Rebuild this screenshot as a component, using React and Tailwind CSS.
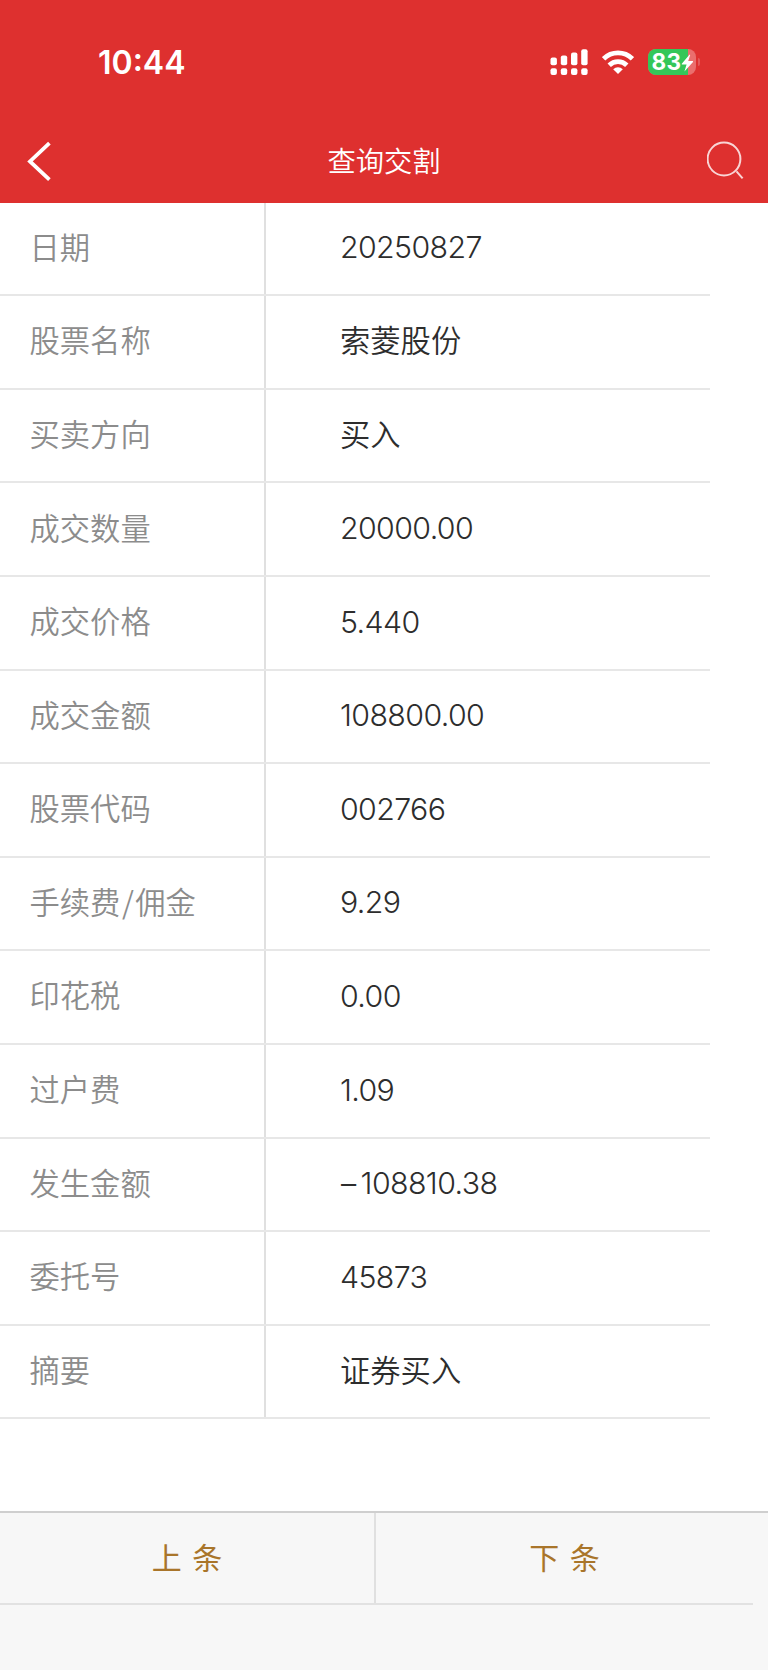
const rows = [
  { label: '日期', value: '20250827' },
  { label: '股票名称', value: '索菱股份' },
  { label: '买卖方向', value: '买入' },
  { label: '成交数量', value: '20000.00' },
  { label: '成交价格', value: '5.440' },
  { label: '成交金额', value: '108800.00' },
  { label: '股票代码', value: '002766' },
  { label: '手续费/佣金', value: '9.29' },
  { label: '印花税', value: '0.00' },
  { label: '过户费', value: '1.09' },
  { label: '发生金额', value: '–108810.38' },
  { label: '委托号', value: '45873' },
  { label: '摘要', value: '证券买入' },
];

function SignalIcon() {
  return (
    <svg width="38" height="27" viewBox="0 0 38 27" fill="#fff">
      <rect x="0.5" y="8.6" width="6.4" height="7.6" rx="2" />
      <rect x="10.8" y="6.6" width="6.4" height="9.6" rx="2" />
      <rect x="21" y="3.4" width="6.4" height="12.8" rx="2" />
      <rect x="31.2" y="0.2" width="6.4" height="16" rx="2" />
      <rect x="0.5" y="19.3" width="6.4" height="6.8" rx="2" />
      <rect x="10.8" y="19.3" width="6.4" height="6.8" rx="2" />
      <rect x="21" y="19.3" width="6.4" height="6.8" rx="2" />
      <rect x="31.2" y="19.3" width="6.4" height="6.8" rx="2" />
    </svg>
  );
}

function WifiIcon() {
  return (
    <svg width="32" height="24" viewBox="0 0 32 24" fill="none" stroke="#fff" strokeWidth="4.8">
      <path d="M1.6 8.8A20.6 20.6 0 0 1 30.4 8.8" />
      <path d="M7.2 15.2A12.6 12.6 0 0 1 24.8 15.2" />
      <path d="M11.2 19.2A7 7 0 0 1 20.8 19.2L16 24Z" fill="#fff" stroke="none" />
    </svg>
  );
}

function Battery() {
  return (
    <div className="flex items-center gap-[2px]">
      <div className="relative flex h-[26px] w-12 items-center overflow-hidden rounded-[8px] bg-[#ea6e6d]">
        <div className="absolute inset-y-0 left-0 w-[40px] bg-[#34c759]" />
        <span className="relative ml-[4px] pt-px text-[22.5px] leading-none font-bold tracking-[0.3px] text-white">83</span>
        <svg className="absolute top-[5px] left-[33px]" width="13" height="18" viewBox="0 0 13 18" fill="#fff">
          <path d="M8.6 0.6L0.8 9.8Q0.4 10.6 1.2 10.6H5.6L3.4 17.4L12 7.9Q12.4 7 11.6 7H7.2L9.2 1Z" />
        </svg>
      </div>
      <div className="h-[8px] w-[2.5px] rounded-r-full bg-[#e2595a]" />
    </div>
  );
}

function Header() {
  return (
    <header className="flex h-[202.6px] flex-col bg-[#de302f] text-white">
      <div className="flex h-[124px] items-center justify-between pr-[68px] pl-[98px]">
        <span className="pt-[2px] text-[32px] leading-none font-[580]">10:44</span>
        <div className="flex items-center gap-[14px]">
          <SignalIcon />
          <WifiIcon />
          <Battery />
        </div>
      </div>
      <div className="flex h-[76px] items-center justify-between pr-[23px] pl-[26px]">
        <svg width="38" height="42" viewBox="0 0 38 42" fill="none" stroke="#fff" strokeWidth="3.8">
          <path d="M23.4 2.2L4 20.4L23.4 38.6" />
        </svg>
        <h1 className="pt-px pr-[3px] text-[28.3px] leading-none font-[350]">查询交割</h1>
        <svg width="38" height="42" viewBox="0 0 38 42" fill="none" stroke="#f9d5d5" strokeWidth="2">
          <circle cx="17" cy="18" r="16.4" />
          <path d="M29.5 30.4L35.6 37.4" />
        </svg>
      </div>
    </header>
  );
}

function Label({ text }) {
  const [head, tail] = text.split('/');
  if (!tail) return text;
  return (
    <span>
      {head}
      <span className="mx-[1.5px]">/</span>
      {tail}
    </span>
  );
}

function Value({ text }) {
  if (!/\d/.test(text)) return <span className="pt-px">{text}</span>;
  const negative = text.startsWith('–');
  return (
    <span className="tracking-[-0.6px]">
      {negative && <span className="mr-[5px] ml-px">–</span>}
      {negative ? text.slice(1) : text}
    </span>
  );
}

function App() {
  return (
    <div className="flex h-[1670px] w-[768px] flex-col bg-white font-[Inter,'Noto_Sans_CJK_SC',sans-serif]">
      <Header />

      {/* 交割明细 */}
      <dl className="w-[710px]">
        {rows.map((row) => (
          <div key={row.label} className="flex h-[93.6px] border-b-2 border-[#e7e7e7]">
            <dt className="flex w-[266px] items-center border-r-2 border-[#e0e0e0] pb-[5px] pl-[29.5px] font-['Noto_Sans_CJK_SC',sans-serif] text-[30.3px] leading-none font-[350] text-[#8c8c8c]">
              <Label text={row.label} />
            </dt>
            <dd className="flex items-center pb-[2px] pl-[74px] text-[30.3px] leading-none font-[350] text-[#2d2d2d]">
              <Value text={row.value} />
            </dd>
          </div>
        ))}
      </dl>

      {/* 底部翻页 */}
      <footer className="mt-auto h-[159px] border-t-2 border-[#cfcfcf] bg-[#f7f7f7]">
        <div className="flex h-[92px] w-[753px] border-b-2 border-[#e2e2e2] text-[30px] leading-none font-[375] text-[#a9752a]">
          <button className="w-[376px] border-r-2 border-[#e0e0e0] [word-spacing:2px]">上 条</button>
          <button className="flex-1 [word-spacing:2px]">下 条</button>
        </div>
      </footer>
    </div>
  );
}

export default App;
